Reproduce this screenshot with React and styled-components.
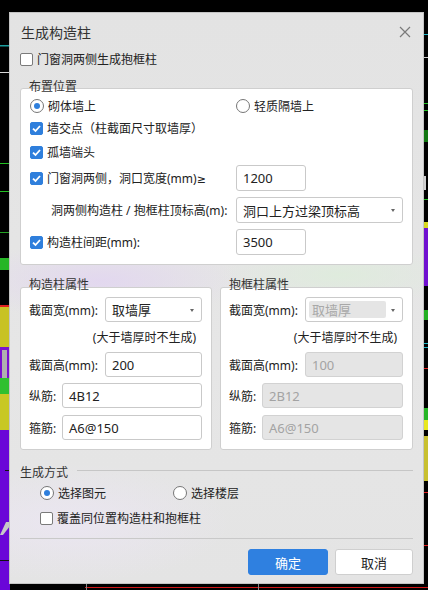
import React from "react";
import styled, { createGlobalStyle } from "styled-components";

const GlobalStyle = createGlobalStyle`
  html, body {
    margin: 0;
    padding: 0;
    background: #000;
  }
  * {
    box-sizing: border-box;
  }
`;

const Page = styled.div`
  position: relative;
  width: 428px;
  height: 590px;
  overflow: hidden;
  background: #000;
  font-family: "Noto Sans", "Noto Sans CJK SC", sans-serif;
  font-size: 12px;
  color: #222;
`;

// CAD drawing that peeks out around the dialog
const Backdrop = styled.svg`
  position: absolute;
  left: 0;
  top: 0;
`;

const Dialog = styled.div`
  position: absolute;
  left: 9px;
  top: 12px;
  width: 415px;
  height: 572px;
  padding: 0 10px 8px;
  border: 1px solid #c4c4c4;
  display: flex;
  flex-direction: column;
  background:
    radial-gradient(ellipse 140px 40px at 90px 268px, rgba(226, 214, 240, 0.9), rgba(226, 214, 240, 0)),
    radial-gradient(ellipse 120px 30px at 330px 262px, rgba(222, 236, 220, 0.9), rgba(222, 236, 220, 0)),
    radial-gradient(ellipse 160px 60px at 60px 510px, rgba(236, 230, 244, 0.8), rgba(236, 230, 244, 0)),
    linear-gradient(180deg, #e3e3e3 0%, #e6e6e6 60%, #e4e4e4 100%);
`;

const TitleBar = styled.div`
  height: 38px;
  display: flex;
  align-items: center;
  justify-content: space-between;
  padding-left: 1px;
  padding-right: 2px;
`;

const Title = styled.span`
  font-size: 14px;
  color: #333;
`;

const CloseButton = styled.svg`
  width: 12px;
  height: 12px;
`;

const Row = styled.div`
  display: flex;
  align-items: center;
  height: ${(p) => p.$h || 20}px;
  margin-top: ${(p) => p.$mt || 0}px;
  padding-left: ${(p) => p.$indent || 0}px;
`;

const GridRow = styled.div`
  display: grid;
  grid-template-columns: ${(p) => p.$cols};
  align-items: center;
  height: ${(p) => p.$h || 26}px;
  margin-top: ${(p) => p.$mt || 0}px;
`;

const Choice = styled.label`
  display: flex;
  align-items: center;
  gap: 4px;
  white-space: nowrap;
  width: ${(p) => (p.$w ? `${p.$w}px` : "auto")};
`;

const Box = styled.span`
  width: 13px;
  height: 13px;
  flex: none;
  border-radius: 2px;
  display: flex;
  align-items: center;
  justify-content: center;
  background: ${(p) => (p.$on ? "#2f7fdc" : "#fff")};
  border: 1px solid ${(p) => (p.$on ? "#2f7fdc" : "#7a7a7a")};
`;

const Radio = styled.span`
  width: 14px;
  height: 14px;
  flex: none;
  border-radius: 50%;
  background: #fff;
  border: 1px solid #767676;
  display: flex;
  align-items: center;
  justify-content: center;

  &::after {
    content: "";
    width: 6px;
    height: 6px;
    border-radius: 50%;
    background: ${(p) => (p.$on ? "#2f7fdc" : "transparent")};
  }
`;

const Sym = styled.span`
  font-family: "DejaVu Sans", sans-serif;
  font-size: 11px;
`;

const Group = styled.div`
  margin-top: ${(p) => p.$mt || 0}px;
  display: flex;
  flex-direction: column;
`;

const Legend = styled.div`
  position: relative;
  z-index: 1;
  height: 14px;
  line-height: 14px;
  padding-left: 9px;
  margin-bottom: ${(p) => p.$overlap}px;
  color: #333;
`;

const Panel = styled.div`
  background: #fff;
  border: 1px solid #cfcfcf;
  border-radius: 3px;
  height: ${(p) => p.$h}px;
  padding: ${(p) => p.$pad};
  display: flex;
  flex-direction: column;
`;

const Columns = styled.div`
  display: grid;
  grid-template-columns: 192px 1fr;
  gap: 8px;
`;

const Input = styled.div`
  height: ${(p) => p.$h || 26}px;
  border: 1px solid ${(p) => (p.$disabled ? "#d2d2d2" : "#c9c9c9")};
  border-radius: 3px;
  background: ${(p) => (p.$disabled ? "#e5e5e5" : "#fff")};
  color: ${(p) => (p.$disabled ? "#a3a3a3" : "#222")};
  display: flex;
  align-items: center;
  padding-left: 6px;
  font-size: 13px;
`;

const Select = styled.div`
  position: relative;
  height: ${(p) => p.$h || 26}px;
  border: 1px solid #cacaca;
  border-radius: 3px;
  background: #fff;
  display: flex;
  align-items: center;
  padding: 3px 16px 3px 3px;
  font-size: 13px;
`;

const SelectValue = styled.div`
  flex: 1;
  height: 100%;
  display: flex;
  align-items: center;
  padding-left: 3px;
  border-radius: 2px;
  background: ${(p) => (p.$disabled ? "#e5e5e5" : "transparent")};
  color: ${(p) => (p.$disabled ? "#a8a8a8" : "#222")};
`;

const Caret = styled.span`
  position: absolute;
  right: 7px;
  top: 50%;
  margin-top: -1px;
  border-left: 2.5px solid transparent;
  border-right: 2.5px solid transparent;
  border-top: 3px solid #666;
`;

const LabelCell = styled.span`
  white-space: nowrap;
  padding-left: ${(p) => p.$indent || 0}px;
`;

const Note = styled.div`
  height: 30px;
  display: flex;
  align-items: center;
  justify-content: flex-end;
  padding-right: 6px;
  white-space: nowrap;
`;

const SectionHeader = styled.div`
  margin-top: 15px;
  height: 14px;
  display: flex;
  align-items: center;
  gap: 9px;
  color: #333;

  &::after {
    content: "";
    flex: 1;
    height: 1px;
    margin-bottom: 3px;
    background: #c6c6c6;
  }
`;

const Separator = styled.div`
  margin-top: 10px;
  height: 1px;
  background: #c9c9c9;
`;

const Footer = styled.div`
  margin-top: 10px;
  display: flex;
  justify-content: flex-end;
  gap: 7px;
`;

const Button = styled.button`
  height: 26px;
  width: ${(p) => p.$w}px;
  border-radius: 3px;
  font-family: inherit;
  font-size: 13px;
  border: 1px solid ${(p) => (p.$primary ? "#2f80e0" : "#cfcfcf")};
  background: ${(p) => (p.$primary ? "#2f80e0" : "#fff")};
  color: ${(p) => (p.$primary ? "#fff" : "#222")};
  padding: 0;
`;

function Check({ on, children, w }) {
  return (
    <Choice $w={w}>
      <Box $on={on}>
        {on ? (
          <svg width="11" height="11" viewBox="0 0 11 11">
            <polyline points="2,5.6 4.5,8 9,3" fill="none" stroke="#fff" strokeWidth="1.8" />
          </svg>
        ) : null}
      </Box>
      {children}
    </Choice>
  );
}

function RadioItem({ on, children, w }) {
  return (
    <Choice $w={w}>
      <Radio $on={on} />
      {children}
    </Choice>
  );
}

function Dropdown({ value, disabled, h }) {
  return (
    <Select $h={h}>
      <SelectValue $disabled={disabled}>{value}</SelectValue>
      <Caret />
    </Select>
  );
}

function CadBackground() {
  return (
    <Backdrop width="428" height="590" viewBox="0 0 428 590">
      {/* left strip */}
      <rect x="0" y="45" width="10" height="1.5" fill="#1b9c9c" />
      <rect x="0" y="72" width="10" height="1" fill="#d8d8d8" />
      <rect x="0" y="163" width="10" height="1" fill="#22c022" />
      <rect x="0" y="191" width="10" height="1" fill="#22c022" />
      <rect x="0" y="232" width="10" height="1" fill="#22a022" />
      <rect x="0" y="258" width="10" height="12" fill="#26b626" />
      <rect x="0" y="305" width="10" height="2" fill="#e02020" />
      <rect x="0" y="307" width="10" height="40" fill="#c8c224" />
      <rect x="0" y="347" width="10" height="32" fill="#7a10d0" />
      <rect x="2" y="350" width="5" height="28" fill="#b0b0b0" />
      <rect x="0" y="378" width="10" height="16" fill="#2fc02f" />
      <rect x="0" y="394" width="10" height="36" fill="#c8c824" />
      <rect x="0" y="430" width="10" height="160" fill="#6a06d8" />
      <rect x="5" y="470" width="4" height="1" fill="#111" />
      <polygon points="0,535 6,522 10,522 10,526 3,535" fill="#c8c8c8" />
      <rect x="0" y="560" width="10" height="1" fill="#111" />
      {/* right strip */}
      <rect x="424" y="34" width="4" height="1" fill="#1bb8c8" />
      <rect x="424" y="57" width="4" height="1" fill="#d0d0d0" />
      <rect x="424" y="103" width="4" height="1" fill="#22c022" />
      <rect x="424" y="110" width="4" height="1" fill="#22c022" />
      <rect x="424" y="130" width="4" height="12" fill="#117711" />
      <rect x="424" y="176" width="2" height="14" fill="#d0d0d0" />
      <rect x="424" y="199" width="4" height="1" fill="#22c022" />
      <rect x="424" y="222" width="4" height="6" fill="#d8d820" />
      <rect x="424" y="228" width="4" height="58" fill="#7010d0" />
      <rect x="424" y="310" width="4" height="10" fill="#22b022" />
      <rect x="424" y="343" width="4" height="1" fill="#1bb8c8" />
      <rect x="424" y="347" width="4" height="1" fill="#1bb8c8" />
      <rect x="424" y="368" width="4" height="1" fill="#e02020" />
      <rect x="424" y="408" width="4" height="12" fill="#26b626" />
      <rect x="424" y="420" width="4" height="10" fill="#e8e820" />
      <rect x="424" y="436" width="4" height="45" fill="#c8c030" />
      <rect x="424" y="492" width="4" height="1" fill="#e02020" />
      <rect x="424" y="545" width="4" height="1" fill="#e02020" />
      {/* bottom strip */}
      <rect x="85" y="587" width="343" height="1" fill="#d01818" />
      <rect x="86" y="584" width="1" height="6" fill="#888" />
      <rect x="258" y="584" width="1" height="6" fill="#888" />
    </Backdrop>
  );
}

export default function App() {
  return (
    <Page>
      <GlobalStyle />
      <CadBackground />
      <Dialog>
        <TitleBar>
          <Title>生成构造柱</Title>
          <CloseButton viewBox="0 0 12 12">
            <path d="M1 1 L11 11 M11 1 L1 11" stroke="#7a7a7a" strokeWidth="1.2" fill="none" />
          </CloseButton>
        </TitleBar>

        <Row $h={16}>
          <Check on={false}>门窗洞两侧生成抱框柱</Check>
        </Row>

        <Group $mt={13}>
          <Legend $overlap={-6}>布置位置</Legend>
          <Panel $h={177} $pad="6px 9px 9px 9px">
            <GridRow $cols="206px 1fr" $h={22}>
              <RadioItem on>砌体墙上</RadioItem>
              <RadioItem on={false}>轻质隔墙上</RadioItem>
            </GridRow>
            <Row $h={22}>
              <Check on>墙交点（柱截面尺寸取墙厚）</Check>
            </Row>
            <Row $h={26}>
              <Check on>孤墙端头</Check>
            </Row>
            <GridRow $cols="206px 70px">
              <Check on>
                <span>
                  门窗洞两侧，洞口宽度(mm)<Sym>≥</Sym>
                </span>
              </Check>
              <Input>1200</Input>
            </GridRow>
            <GridRow $cols="206px 1fr" $mt={6}>
              <LabelCell $indent={21}>洞两侧构造柱 / 抱框柱顶标高(m):</LabelCell>
              <Dropdown value="洞口上方过梁顶标高" />
            </GridRow>
            <GridRow $cols="206px 70px" $mt={6}>
              <Check on>构造柱间距(mm):</Check>
              <Input>3500</Input>
            </GridRow>
          </Panel>
        </Group>

        <Columns>
          <Group $mt={13}>
            <Legend $overlap={-5}>构造柱属性</Legend>
            <Panel $h={163} $pad="9px 9px 9px 8px">
              <GridRow $cols="76px 1fr" $h={25}>
                <LabelCell>截面宽(mm):</LabelCell>
                <Dropdown value="取墙厚" h={25} />
              </GridRow>
              <Note>(大于墙厚时不生成)</Note>
              <GridRow $cols="76px 1fr" $h={25}>
                <LabelCell>截面高(mm):</LabelCell>
                <Input $h={25}>200</Input>
              </GridRow>
              <GridRow $cols="33px 1fr" $h={25} $mt={6}>
                <LabelCell>纵筋:</LabelCell>
                <Input $h={25}>4B12</Input>
              </GridRow>
              <GridRow $cols="33px 1fr" $h={25} $mt={7}>
                <LabelCell>箍筋:</LabelCell>
                <Input $h={25}>A6@150</Input>
              </GridRow>
            </Panel>
          </Group>

          <Group $mt={13}>
            <Legend $overlap={-5}>抱框柱属性</Legend>
            <Panel $h={163} $pad="9px 9px 9px 8px">
              <GridRow $cols="76px 1fr" $h={25}>
                <LabelCell>截面宽(mm):</LabelCell>
                <Dropdown value="取墙厚" disabled h={25} />
              </GridRow>
              <Note>(大于墙厚时不生成)</Note>
              <GridRow $cols="76px 1fr" $h={25}>
                <LabelCell>截面高(mm):</LabelCell>
                <Input $h={25} $disabled>100</Input>
              </GridRow>
              <GridRow $cols="33px 1fr" $h={25} $mt={6}>
                <LabelCell>纵筋:</LabelCell>
                <Input $h={25} $disabled>2B12</Input>
              </GridRow>
              <GridRow $cols="33px 1fr" $h={25} $mt={7}>
                <LabelCell>箍筋:</LabelCell>
                <Input $h={25} $disabled>A6@150</Input>
              </GridRow>
            </Panel>
          </Group>
        </Columns>

        <SectionHeader>生成方式</SectionHeader>
        <Row $mt={4} $indent={20}>
          <RadioItem on w={133}>选择图元</RadioItem>
          <RadioItem on={false}>选择楼层</RadioItem>
        </Row>
        <Row $mt={5} $indent={20}>
          <Check on={false}>覆盖同位置构造柱和抱框柱</Check>
        </Row>

        <Separator />
        <Footer>
          <Button $primary $w={80}>确定</Button>
          <Button $w={78}>取消</Button>
        </Footer>
      </Dialog>
    </Page>
  );
}
